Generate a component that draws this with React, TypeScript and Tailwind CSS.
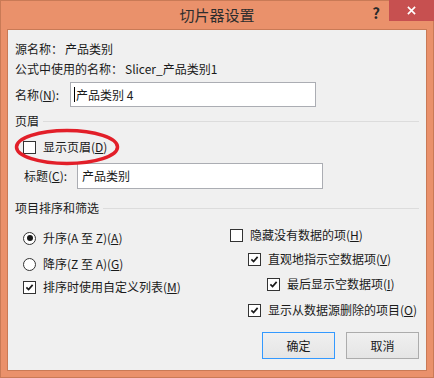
import React from "react";

const font = { fontFamily: '"Noto Sans CJK SC", "Microsoft YaHei", sans-serif' };

const Check = () => (
  <svg viewBox="0 0 13 13" className="h-[13px] w-[13px]">
    <path d="M2.8 6.4 L5.4 9 L10.2 3.4" fill="none" stroke="#1a1a1a" strokeWidth="2" />
  </svg>
);

const Checkbox: React.FC<{ checked?: boolean }> = ({ checked }) => (
  <span className="flex h-[13px] w-[13px] shrink-0 items-center justify-center border border-[#333333] bg-white">
    {checked && <Check />}
  </span>
);

const Radio: React.FC<{ checked?: boolean }> = ({ checked }) => (
  <span className="flex h-[13px] w-[13px] shrink-0 items-center justify-center rounded-full border border-[#333333] bg-white">
    {checked && <span className="h-[6px] w-[6px] rounded-full bg-[#1a1a1a]" />}
  </span>
);

const Option: React.FC<{ kind: "check" | "radio"; checked?: boolean; indent: string; className?: string; children: React.ReactNode }> = ({
  kind,
  checked,
  indent,
  className,
  children,
}) => (
  <div className={`flex h-[20px] items-center gap-[7px] ${indent} ${className ?? ""}`}>
    {kind === "check" ? <Checkbox checked={checked} /> : <Radio checked={checked} />}
    <span>{children}</span>
  </div>
);

const GroupHeader: React.FC<{ title: string; className?: string }> = ({ title, className }) => (
  <div className={`flex h-[16px] items-center gap-[4px] pr-[7px] ${className ?? ""}`}>
    <span>{title}</span>
    <span className="h-px flex-1 bg-[#dcdcdc]" />
  </div>
);

export default function App() {
  return (
    <div
      className="relative flex h-[378px] w-[434px] flex-col border border-[#c97a56] bg-[#ea916b] px-[6px] pb-[6px] text-[12px] text-[#1a1a1a]"
      style={font}
    >
      {/* title bar */}
      <div className="relative flex h-[28px] shrink-0 items-center justify-center">
        <span className="text-[15px] text-[#2d2d2d]">切片器设置</span>
        <div className="absolute right-[-7px] top-[-1px] flex items-start">
          <span className="mr-[9px] mt-[2px] text-[15px] font-bold text-[#2a2a2a]">?</span>
          <button className="flex h-[21px] w-[45px] items-center justify-center bg-[#c75050]">
            <svg viewBox="0 0 10 10" className="h-[9px] w-[9px]">
              <path d="M1 1 L9 9 M9 1 L1 9" stroke="#ffffff" strokeWidth="1.8" />
            </svg>
          </button>
        </div>
      </div>

      {/* client area */}
      <div className="relative flex flex-1 flex-col border border-[#c97a56] bg-[#f0f0f0] pl-[7px]">
        <div className="mt-[9px] flex h-[20px] items-center">
          <span className="w-[50px]">源名称：</span>
          <span>产品类别</span>
        </div>
        <div className="flex h-[19px] items-center">
          <span className="w-[110px]">公式中使用的名称：</span>
          <span>Slicer_产品类别1</span>
        </div>
        <div className="mt-[4px] flex h-[25px] items-center">
          <span className="w-[55px]">
            名称(<u>N</u>):
          </span>
          <div className="flex h-[25px] w-[246px] items-center border border-[#abadb3] bg-white pl-[3px]">
            <span className="mr-px h-[15px] w-px bg-black" />
            <span>产品类别 4</span>
          </div>
        </div>

        <GroupHeader title="页眉" className="mt-[6px]" />
        <div className="relative mt-[8px]">
          <Option kind="check" indent="pl-[8px]">
            显示页眉(<u>D</u>)
          </Option>
          <svg className="pointer-events-none absolute left-[-1px] top-[-9px] h-[38px] w-[106px]" viewBox="0 0 106 38">
            <ellipse cx="53" cy="19" rx="50.5" ry="16.5" fill="none" stroke="#e21f29" strokeWidth="3.5" />
          </svg>
        </div>
        <div className="mt-[6px] flex h-[26px] items-center pl-[9px]">
          <span className="w-[53px]">
            标题(<u>C</u>):
          </span>
          <div className="flex h-[26px] w-[246px] items-center border border-[#abadb3] bg-white pl-[4px]">
            产品类别
          </div>
        </div>

        <GroupHeader title="项目排序和筛选" className="mt-[11px]" />
        <div className="flex">
          <div className="flex w-[215px] flex-col">
            <Option kind="radio" checked indent="pl-[8px]" className="mt-[12px]">
              升序(A 至 Z)(<u>A</u>)
            </Option>
            <Option kind="radio" indent="pl-[8px]" className="mt-[6px]">
              降序(Z 至 A)(<u>G</u>)
            </Option>
            <Option kind="check" checked indent="pl-[8px]" className="mt-[3px]">
              排序时使用自定义列表(<u>M</u>)
            </Option>
          </div>
          <div className="flex flex-col">
            <Option kind="check" indent="pl-0" className="mt-[9px]">
              隐藏没有数据的项(<u>H</u>)
            </Option>
            <Option kind="check" checked indent="pl-[18px]" className="mt-[4px]">
              直观地指示空数据项(<u>V</u>)
            </Option>
            <Option kind="check" checked indent="pl-[37px]" className="mt-[5px]">
              最后显示空数据项(<u>I</u>)
            </Option>
            <Option kind="check" checked indent="pl-[18px]" className="mt-[6px]">
              显示从数据源删除的项目(<u>O</u>)
            </Option>
          </div>
        </div>

        <div className="mt-[12px] flex justify-end gap-[11px] pr-[7px]">
          <button className="h-[27px] w-[73px] border border-[#3399ff] bg-gradient-to-b from-[#f0f0f0] to-[#e5e5e5]">
            确定
          </button>
          <button className="h-[27px] w-[73px] border border-[#acacac] bg-gradient-to-b from-[#f0f0f0] to-[#e5e5e5]">
            取消
          </button>
        </div>
      </div>
    </div>
  );
}
